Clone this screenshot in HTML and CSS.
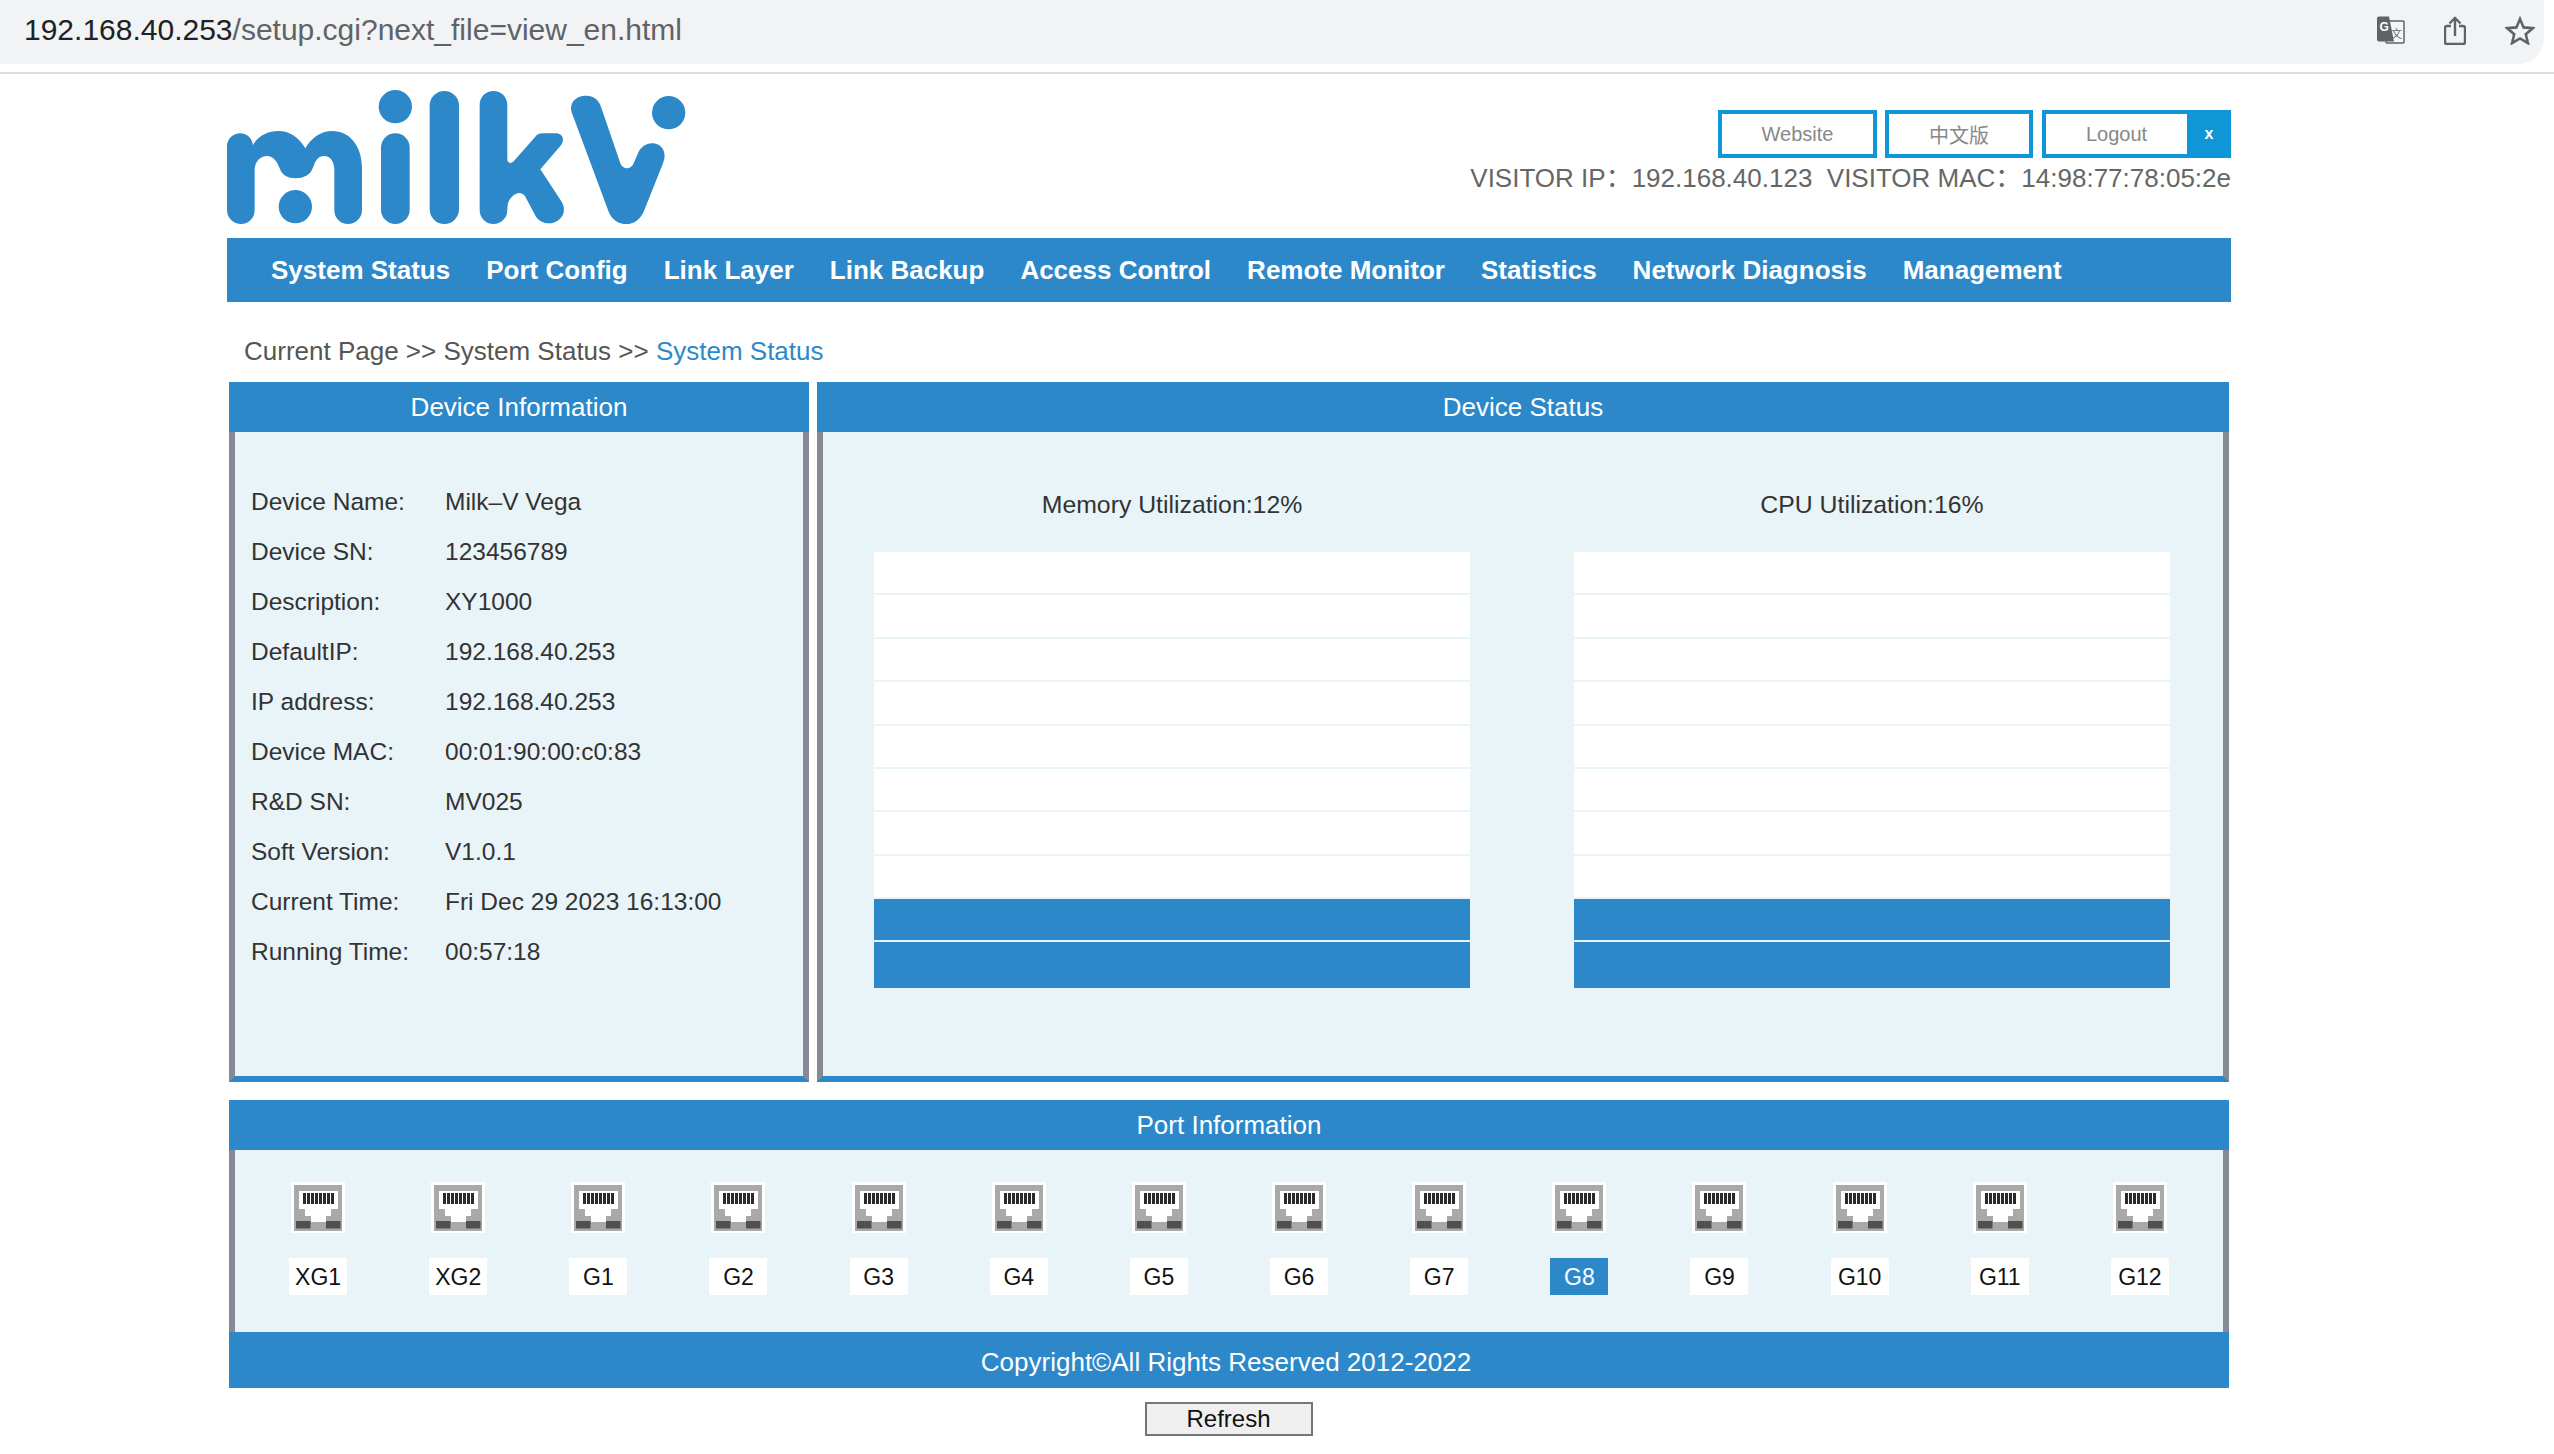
FILE: index.html
```html
<!DOCTYPE html>
<html lang="en">
  <head>
    <meta charset="UTF-8" />
    <title>Milk-V Vega</title>
    <link rel="stylesheet" href="styles.css">
  </head>
  <body>
    <svg class="defs" width="0" height="0">
      <symbol id="rj45" viewBox="0 0 48 46">
        <rect width="48" height="46" fill="#a9a9a9" />
        <path d="M5 6H44V24H37V31H32V37H17V31H11V24H5Z" fill="#fff" />
        <path d="M9 8h3v11H9zM13 8h3v11h-3zM17 8h3v11h-3zM21 8h3v11h-3zM25 8h3v11h-3zM29 8h3v11h-3zM33 8h3v11h-3zM37 8h3v11h-3z" fill="#2a2a2a" />
        <rect x="2" y="36" width="14.500" height="7.500" fill="#505050" />
        <rect x="32" y="36" width="14.500" height="7.500" fill="#505050" />
      </symbol>
    </svg>

    <div class="toolbar">
      <div class="omnibox">
        <span class="url"><span class="host">192.168.40.253</span>/setup.cgi?next_file=view_en.html</span>
        <div class="tool-icons">
          <svg class="translate-icon" width="29" height="29" viewBox="0 0 29 29">
            <rect x="10" y="5" width="18" height="22" rx="1" fill="#f4f5f6" stroke="#5f6368" stroke-width="1.5" />
            <path d="M1 2.500a2 2 0 0 1 2-2h10l5 25H3a2 2 0 0 1-2-2Z" fill="#5f6368" />
            <text x="3.500" y="15" class="translate-g">G</text>
            <text x="15" y="22" class="translate-zh">文</text>
          </svg>
          <svg width="22" height="29" viewBox="0 0 22 29" fill="none" stroke="#5f6368" stroke-width="2.400">
            <path d="M7 10H3a2 2 0 0 0-2 2v14a2 2 0 0 0 2 2h16a2 2 0 0 0 2-2V12a2 2 0 0 0-2-2h-4" />
            <path d="M11 20V2M5.500 7.500 11 2l5.500 5.500" />
          </svg>
          <svg width="30" height="29" viewBox="0 0 30 29" fill="none" stroke="#5f6368" stroke-width="2.600">
            <path d="M15 3l3.600 8.400 9.100.8-6.900 6 2.100 8.900L15 22.400l-7.900 4.700 2.100-8.900-6.900-6 9.100-.8Z" />
          </svg>
        </div>
      </div>
    </div>

    <div class="page">
      <div class="top">
        <svg class="logo" width="460" height="134" viewBox="20 30 1380 402">
          <g fill="#2d88ca">
            <path d="M20 200C20 175 40 160 60 160C80 160 95 175 98 195C115 165 145 153 175 153C205 153 235 170 255 205C275 170 305 153 335 153C390 153 425 200 425 265L425 390C425 415 405 432 383 432C360 432 342 415 342 390L342 270C342 245 330 228 312 228C290 228 285 245 277 265C270 285 250 295 226 295C200 295 185 285 178 265C170 245 160 228 140 228C120 228 103 245 103 270L103 390C103 415 85 432 62 432C40 432 20 415 20 390Z" />
            <circle cx="225" cy="380" r="50" />
            <circle cx="525" cy="80" r="50" />
            <rect x="482" y="160" width="86" height="272" rx="43" />
            <rect x="628" y="33" width="88" height="399" rx="44" />
            <path d="M778 75C778 50 797 33 819 33C842 33 861 50 861 75L861 238C861 250 872 252 880 244L945 170C950 163 958 160 968 160L1005 160C1028 160 1035 180 1020 198L960 268L1022 362C1045 395 1020 430 985 430C970 430 955 422 947 410L915 350C905 335 890 335 875 350C865 360 861 370 861 390C861 415 842 432 819 432C797 432 778 415 778 390Z" />
            <path d="M1055 100C1045 70 1065 47 1098 47C1120 47 1135 60 1142 80L1200 250C1207 270 1232 270 1240 250L1255 215C1265 198 1280 190 1295 190C1325 190 1342 218 1328 250L1270 395C1258 420 1240 432 1218 432C1195 432 1175 420 1165 395Z" />
            <circle cx="1345" cy="98" r="50" />
          </g>
        </svg>
        <div class="top-right">
          <div class="top-links">
            <a class="top-btn website">Website</a>
            <a class="top-btn lang">中文版</a>
            <a class="top-btn logout">Logout</a>
            <a class="close-btn">x</a>
          </div>
          <div class="visitor">VISITOR IP：192.168.40.123&nbsp;&nbsp;VISITOR MAC：14:98:77:78:05:2e</div>
        </div>
      </div>

      <div class="nav">
        <a>System Status</a>
        <a>Port Config</a>
        <a>Link Layer</a>
        <a>Link Backup</a>
        <a>Access Control</a>
        <a>Remote Monitor</a>
        <a>Statistics</a>
        <a>Network Diagnosis</a>
        <a>Management</a>
      </div>

      <div class="crumbs">Current Page &gt;&gt; System Status &gt;&gt; <span class="crumb-now">System Status</span></div>

      <div class="panels">
        <div class="panel">
          <div class="panel-head">Device Information</div>
          <div class="panel-body info">
            <div class="info-row"><span class="info-label">Device Name:</span><span>Milk–V Vega</span></div>
            <div class="info-row"><span class="info-label">Device SN:</span><span>123456789</span></div>
            <div class="info-row"><span class="info-label">Description:</span><span>XY1000</span></div>
            <div class="info-row"><span class="info-label">DefaultIP:</span><span>192.168.40.253</span></div>
            <div class="info-row"><span class="info-label">IP address:</span><span>192.168.40.253</span></div>
            <div class="info-row"><span class="info-label">Device MAC:</span><span>00:01:90:00:c0:83</span></div>
            <div class="info-row"><span class="info-label">R&amp;D SN:</span><span>MV025</span></div>
            <div class="info-row"><span class="info-label">Soft Version:</span><span>V1.0.1</span></div>
            <div class="info-row"><span class="info-label">Current Time:</span><span>Fri Dec 29 2023 16:13:00</span></div>
            <div class="info-row"><span class="info-label">Running Time:</span><span>00:57:18</span></div>
          </div>
        </div>

        <div class="panel">
          <div class="panel-head">Device Status</div>
          <div class="panel-body charts">
            <div class="chart">
              <div class="chart-title">Memory Utilization:12%</div>
              <div class="bars">
                <div class="bar"></div><div class="bar"></div><div class="bar"></div><div class="bar"></div>
                <div class="bar"></div><div class="bar"></div><div class="bar"></div><div class="bar"></div>
                <div class="bar on"></div><div class="bar on last"></div>
              </div>
            </div>
            <div class="chart">
              <div class="chart-title">CPU Utilization:16%</div>
              <div class="bars">
                <div class="bar"></div><div class="bar"></div><div class="bar"></div><div class="bar"></div>
                <div class="bar"></div><div class="bar"></div><div class="bar"></div><div class="bar"></div>
                <div class="bar on"></div><div class="bar on last"></div>
              </div>
            </div>
          </div>
        </div>
      </div>

      <div class="ports-panel">
        <div class="panel-head">Port Information</div>
        <div class="ports">
          <div class="port"><span class="port-icon"><svg width="48" height="46"><use href="#rj45" /></svg></span><span class="port-name">XG1</span></div>
          <div class="port"><span class="port-icon"><svg width="48" height="46"><use href="#rj45" /></svg></span><span class="port-name">XG2</span></div>
          <div class="port"><span class="port-icon"><svg width="48" height="46"><use href="#rj45" /></svg></span><span class="port-name">G1</span></div>
          <div class="port"><span class="port-icon"><svg width="48" height="46"><use href="#rj45" /></svg></span><span class="port-name">G2</span></div>
          <div class="port"><span class="port-icon"><svg width="48" height="46"><use href="#rj45" /></svg></span><span class="port-name">G3</span></div>
          <div class="port"><span class="port-icon"><svg width="48" height="46"><use href="#rj45" /></svg></span><span class="port-name">G4</span></div>
          <div class="port"><span class="port-icon"><svg width="48" height="46"><use href="#rj45" /></svg></span><span class="port-name">G5</span></div>
          <div class="port"><span class="port-icon"><svg width="48" height="46"><use href="#rj45" /></svg></span><span class="port-name">G6</span></div>
          <div class="port"><span class="port-icon"><svg width="48" height="46"><use href="#rj45" /></svg></span><span class="port-name">G7</span></div>
          <div class="port"><span class="port-icon"><svg width="48" height="46"><use href="#rj45" /></svg></span><span class="port-name active">G8</span></div>
          <div class="port"><span class="port-icon"><svg width="48" height="46"><use href="#rj45" /></svg></span><span class="port-name">G9</span></div>
          <div class="port"><span class="port-icon"><svg width="48" height="46"><use href="#rj45" /></svg></span><span class="port-name">G10</span></div>
          <div class="port"><span class="port-icon"><svg width="48" height="46"><use href="#rj45" /></svg></span><span class="port-name">G11</span></div>
          <div class="port"><span class="port-icon"><svg width="48" height="46"><use href="#rj45" /></svg></span><span class="port-name">G12</span></div>
        </div>
        <div class="copyright">Copyright©All Rights Reserved 2012-2022</div>
      </div>

      <div class="refresh-row">
        <button class="refresh">Refresh</button>
      </div>
    </div>
  </body>
</html>
```

FILE: styles.css
```css
* {
  box-sizing: border-box;
}
html,
body {
  height: 1454px;
  overflow: hidden;
}
body {
  margin: 0;
  background-color: #fff;
  font-family: "Liberation Sans", Arial, "Noto Sans CJK SC", sans-serif;
  color: #333;
}
.defs {
  position: absolute;
}

/* browser address bar */
.toolbar {
  height: 74px;
  border-bottom: 2px solid #dedede;
}
.omnibox {
  height: 64px;
  margin-right: 10px;
  padding: 0 9px 4px 24px;
  display: flex;
  align-items: center;
  justify-content: space-between;
  background-color: #f1f3f4;
  border-bottom-right-radius: 26px;
}
.url {
  font-size: 30px;
  color: #5f6368;
}
.host {
  color: #202124;
}
.tool-icons {
  display: flex;
  align-items: center;
  gap: 39px;
}
.translate-g {
  font-size: 12px;
  font-weight: bold;
  fill: #fff;
}
.translate-zh {
  font-size: 11px;
  fill: #5f6368;
}

.page {
  width: 2004px;
  margin-left: 227px;
}

/* logo and visitor info */
.top {
  height: 164px;
  display: flex;
  justify-content: space-between;
}
.logo {
  margin-top: 16px;
}
.top-right {
  padding-top: 36px;
  display: flex;
  flex-direction: column;
  align-items: flex-end;
}
.top-links {
  display: flex;
}
.top-btn {
  height: 48px;
  display: flex;
  align-items: center;
  justify-content: center;
  border: 4px solid #0f96d6;
  font-size: 20px;
  color: #888;
}
.website {
  width: 159px;
  margin-right: 8px;
}
.lang {
  width: 148px;
  margin-right: 9px;
}
.logout {
  width: 145px;
  border-right: 0;
}
.close-btn {
  width: 44px;
  height: 48px;
  display: flex;
  align-items: center;
  justify-content: center;
  background-color: #0f96d6;
  color: #fff;
  font-size: 16px;
  font-weight: bold;
}
.visitor {
  margin-top: 4px;
  font-size: 26px;
  line-height: 32px;
  color: #666;
}

.nav {
  height: 64px;
  padding-left: 44px;
  display: flex;
  align-items: center;
  gap: 36px;
  background-color: #2d88ca;
}
.nav a {
  color: #fff;
  font-size: 26px;
  font-weight: bold;
}

.crumbs {
  height: 80px;
  padding: 34px 0 0 17px;
  font-size: 26px;
  line-height: 30px;
  color: #555;
}
.crumb-now {
  color: #2d88ca;
}

/* device panels */
.panels {
  margin: 0 2px;
  display: grid;
  grid-template-columns: 580px 1412px;
  gap: 8px;
}
.panel-head {
  height: 50px;
  display: flex;
  align-items: center;
  justify-content: center;
  background-color: #2d88ca;
  color: #fff;
  font-size: 26px;
}
.panel-body {
  height: 650px;
  background-color: #e9f4f9;
  border-left: 6px solid #868a94;
  border-right: 6px solid #868a94;
  border-bottom: 6px solid #2d88ca;
}
.info {
  padding: 45px 0 0 16px;
  font-size: 24.500px;
}
.info-row {
  height: 50px;
  display: flex;
  align-items: center;
}
.info-label {
  width: 194px;
}
.charts {
  padding: 50px 53px 0 51px;
  display: grid;
  grid-template-columns: 596px 596px;
  column-gap: 104px;
  align-items: start;
}
.chart-title {
  height: 46px;
  margin-bottom: 24px;
  display: flex;
  align-items: center;
  justify-content: center;
  font-size: 24.800px;
}
.bars {
  display: flex;
  flex-direction: column;
  gap: 2px;
}
.bar {
  height: 41.400px;
  background-color: #fff;
}
.bar.on {
  background-color: #2d88ca;
  height: 41px;
}
.bar.last {
  height: 46px;
}

/* ports */
.ports-panel {
  margin: 18px 2px 0;
}
.ports {
  height: 182px;
  padding: 32px 13px 0;
  display: grid;
  grid-template-columns: repeat(14, 1fr);
  background-color: #e9f4f9;
  border-left: 6px solid #868a94;
  border-right: 6px solid #868a94;
}
.port {
  display: flex;
  flex-direction: column;
  align-items: center;
}
.port-icon {
  width: 54px;
  height: 51px;
  display: flex;
  align-items: center;
  justify-content: center;
  background-color: #fff;
}
.port-name {
  width: 58px;
  height: 37px;
  margin-top: 25px;
  padding-top: 1px;
  display: flex;
  align-items: center;
  justify-content: center;
  background-color: #fff;
  color: #111;
  font-size: 23px;
}
.port-name.active {
  background-color: #2d88ca;
  color: #fff;
}
.copyright {
  height: 56px;
  padding: 5px 6px 0 0;
  display: flex;
  align-items: center;
  justify-content: center;
  background-color: #2d88ca;
  color: #fff;
  font-size: 26px;
}

.refresh-row {
  margin-top: 14px;
  display: flex;
  justify-content: center;
  padding-right: 1px;
}
.refresh {
  width: 168px;
  height: 34px;
  padding: 0;
  background-color: #efefef;
  border: 2px solid #767676;
  font-family: inherit;
  font-size: 24px;
  color: #111;
}
```
